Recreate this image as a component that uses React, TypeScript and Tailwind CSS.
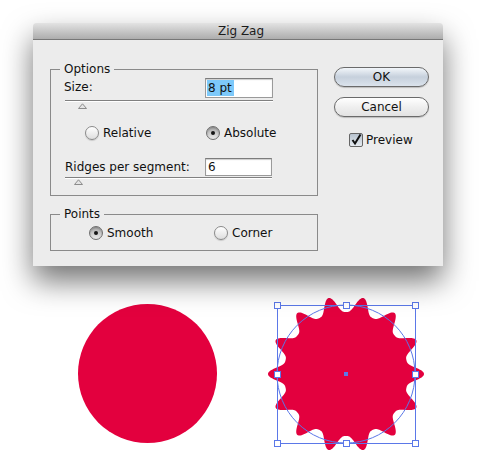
import React from 'react';

// 14 ridges round the circle, tips at 0° and 180°, narrow tips and round valleys
const zigzagPath = (() => {
  const cx = 85;
  const cy = 85;
  const steps = 700;
  let d = '';
  for (let i = 0; i <= steps; i++) {
    const t = (i / steps) * Math.PI * 2;
    const k = (1 + Math.cos(14 * t)) / 2;
    const r = 62 + 16 * Math.pow(k, 1.6);
    const x = cx + r * Math.cos(t);
    const y = cy + r * Math.sin(t);
    d += `${i === 0 ? 'M' : 'L'}${x.toFixed(2)} ${y.toFixed(2)} `;
  }
  return d + 'Z';
})();

const Radio = ({ on }: { on?: boolean }) => (
  <span
    className={
      on
        ? 'flex h-[14px] w-[14px] items-center justify-center rounded-full border border-[#6f6f6f] bg-linear-to-b from-[#a9a9a9] to-[#ececec] shadow-[inset_0_1px_2px_rgba(0,0,0,0.25)]'
        : 'flex h-[14px] w-[14px] items-center justify-center rounded-full border border-[#8a8a8a] bg-linear-to-b from-[#ffffff] to-[#dedede] shadow-[0_1px_1px_rgba(0,0,0,0.15)]'
    }
  >
    {on && <span className="h-[4px] w-[4px] rounded-full bg-[#161616]" />}
  </span>
);

const Thumb = () => (
  <svg width="9" height="6" viewBox="0 0 9 6" className="block">
    <path d="M0.5 5.5 L4.5 0.8 L8.5 5.5 Z" fill="#e4e4e4" stroke="#8c8c8c" strokeWidth="1" />
  </svg>
);

const Track = ({ w }: { w: string }) => (
  <div className={`${w} h-[2px] border-t border-[#808080] border-b-white bg-white`} />
);

export default function App() {
  return (
    <div className="flex h-[470px] w-[480px] flex-col overflow-hidden bg-white font-['DejaVu_Sans',sans-serif] text-[12px] leading-[14px] text-[#111]">
      {/* dialog */}
      <div className="relative z-10 ml-[33px] mt-[23px] flex h-[243px] w-[410px] flex-col rounded-t-[4px] bg-[#ececec] shadow-[0_15px_30px_rgba(0,0,0,0.55)]">
        <div className="flex h-[17px] items-center justify-center rounded-t-[4px] border-b border-[#777] bg-linear-to-b from-[#e3e3e3] to-[#adadad] pl-[6px] text-[12px] text-[#1c1c1c]">
          Zig Zag
        </div>

        <div className="flex pl-[17px] pt-[22px]">
          <div className="flex flex-col">
            <fieldset className="m-0 w-[268px] border border-[#8a8a8a] p-0">
              <legend className="ml-[9px] px-[4px] leading-[14px]">Options</legend>
              <div className="flex flex-col pb-[10px] pl-[13px]">
                <div className="mt-[2px] flex h-[20px] w-[209px] items-center justify-between">
                  <span className="mt-[-2px]">Size:</span>
                  <span className="flex h-[20px] w-[68px] items-stretch border border-[#9a9a9a] border-t-[#7c7c7c] bg-white p-[1px] shadow-[inset_0_1px_1px_rgba(0,0,0,0.2)]">
                    <span className="flex items-center bg-[#7dc9fa] pl-[1px] pr-[2px]">8 pt</span>
                  </span>
                </div>
                <div className="mt-[2px] ml-[1px]">
                  <Track w="w-[208px]" />
                </div>
                <div className="ml-[14px] mt-[1px]">
                  <Thumb />
                </div>

                <div className="mt-[17px] flex h-[14px] items-center">
                  <div className="ml-[21px] flex w-[121px] items-center gap-[4px]">
                    <Radio />
                    <span>Relative</span>
                  </div>
                  <div className="flex items-center gap-[4px]">
                    <Radio on />
                    <span>Absolute</span>
                  </div>
                </div>

                <div className="mt-[18px] flex h-[17px] w-[208px] items-center justify-between">
                  <span className="ml-[1px]">Ridges per segment:</span>
                  <span className="flex h-[18px] w-[67px] items-center border border-[#9a9a9a] border-t-[#7c7c7c] bg-white pl-[2px] shadow-[inset_0_1px_1px_rgba(0,0,0,0.2)]">
                    6
                  </span>
                </div>
                <div className="mt-[2px] ml-[1px]">
                  <Track w="w-[207px]" />
                </div>
                <div className="ml-[10px] mt-[0px]">
                  <Thumb />
                </div>
              </div>
            </fieldset>

            <fieldset className="m-0 mt-[11px] w-[268px] border border-[#8a8a8a] p-0">
              <legend className="ml-[9px] px-[4px] leading-[14px]">Points</legend>
              <div className="flex items-center pb-[10px] pl-[13px] pt-[5px]">
                <div className="ml-[25px] flex w-[125px] items-center gap-[4px]">
                  <Radio on />
                  <span>Smooth</span>
                </div>
                <div className="flex items-center gap-[4px]">
                  <Radio />
                  <span>Corner</span>
                </div>
              </div>
            </fieldset>
          </div>

          <div className="ml-[16px] mt-[5px] flex w-[95px] flex-col">
            <button className="flex h-[20px] w-[95px] items-center justify-center rounded-full border border-[#6a6a6a] bg-linear-to-b from-[#f2f6fa] via-[#c6d0dc] to-[#dbe3ec] text-[12px] text-[#111] shadow-[0_1px_1px_rgba(0,0,0,0.2)]">
              OK
            </button>
            <button className="mt-[10px] flex h-[20px] w-[95px] items-center justify-center rounded-full border border-[#6a6a6a] bg-linear-to-b from-[#ffffff] via-[#efefef] to-[#e2e2e2] text-[12px] text-[#111] shadow-[0_1px_1px_rgba(0,0,0,0.2)]">
              Cancel
            </button>
            <div className="ml-[15px] mt-[16px] flex items-center gap-[3px]">
              <span className="flex h-[14px] w-[14px] items-center justify-center rounded-[2px] border border-[#666] bg-linear-to-b from-[#b7c2ce] to-[#e6ebf0]">
                <svg width="12" height="12" viewBox="0 0 12 12">
                  <path d="M2.5 6 L5 9.5 L10.5 0.5" fill="none" stroke="#111" strokeWidth="2" />
                </svg>
              </span>
              <span>Preview</span>
            </div>
          </div>
        </div>
      </div>

      {/* artwork: before and after */}
      <div className="flex items-start pt-[23px]">
        <div className="ml-[78px] mt-[15px] h-[139px] w-[139px] rounded-full bg-[#e3003e]" />
        <svg width="170" height="170" viewBox="0 0 170 170" className="ml-[44px] block">
          <path d={zigzagPath} fill="#e3003e" />
          <circle cx="85" cy="85" r="69" fill="none" stroke="#5b78e8" strokeWidth="1" />
          <rect x="16.5" y="16.5" width="138" height="138" fill="none" stroke="#5b78e8" strokeWidth="1" />
          {[
            [16, 16],
            [85, 16],
            [154, 16],
            [16, 85],
            [154, 85],
            [16, 154],
            [85, 154],
            [154, 154],
          ].map(([x, y], i) => (
            <rect key={i} x={x - 2.5} y={y - 2.5} width="6" height="6" fill="white" stroke="#5b78e8" strokeWidth="1" />
          ))}
          <rect x="83" y="83" width="4" height="4" fill="#5b78e8" />
        </svg>
      </div>
    </div>
  );
}
